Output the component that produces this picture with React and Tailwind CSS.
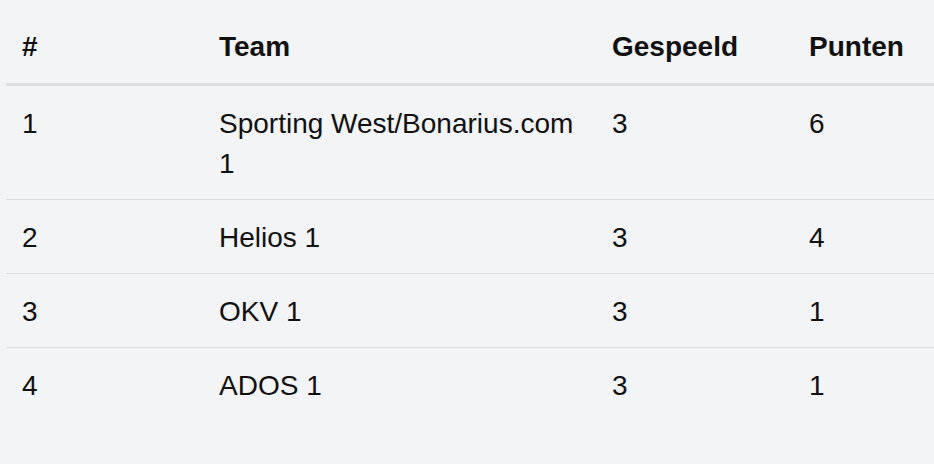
import React from "react";

const rows = [
  { pos: 1, team: "Sporting West/Bonarius.com 1", played: 3, points: 6 },
  { pos: 2, team: "Helios 1", played: 3, points: 4 },
  { pos: 3, team: "OKV 1", played: 3, points: 1 },
  { pos: 4, team: "ADOS 1", played: 3, points: 1 },
];

export default function App() {
  return (
    <div
      className="w-[934px] h-[464px] overflow-hidden bg-[#f3f4f6] text-[#111] pt-[11px] pl-[6px]"
      style={{ fontFamily: '"Liberation Sans", Arial, Helvetica, sans-serif' }}
    >
      <table className="w-[928px] table-fixed border-collapse text-[28px] leading-[40px]">
        <colgroup>
          <col className="w-[197px]" />
          <col className="w-[393px]" />
          <col className="w-[197px]" />
          <col />
        </colgroup>
        <thead>
          <tr className="border-b-[3px] border-[#dcdde0]">
            <th className="text-left font-bold px-4 py-4 align-bottom">#</th>
            <th className="text-left font-bold px-4 py-4 align-bottom">Team</th>
            <th className="text-left font-bold px-4 py-4 align-bottom">Gespeeld</th>
            <th className="text-left font-bold px-4 py-4 align-bottom">Punten</th>
          </tr>
        </thead>
        <tbody>
          {rows.map((r, i) => (
            <tr
              key={r.pos}
              className={i < rows.length - 1 ? "border-b border-[#dcdde0]" : ""}
            >
              <td className="px-4 pt-[18px] pb-[15px] align-top">{r.pos}</td>
              <td className="px-4 pt-[18px] pb-[15px] align-top">{r.team}</td>
              <td className="px-4 pt-[18px] pb-[15px] align-top">{r.played}</td>
              <td className="px-4 pt-[18px] pb-[15px] align-top">{r.points}</td>
            </tr>
          ))}
        </tbody>
      </table>
    </div>
  );
}
